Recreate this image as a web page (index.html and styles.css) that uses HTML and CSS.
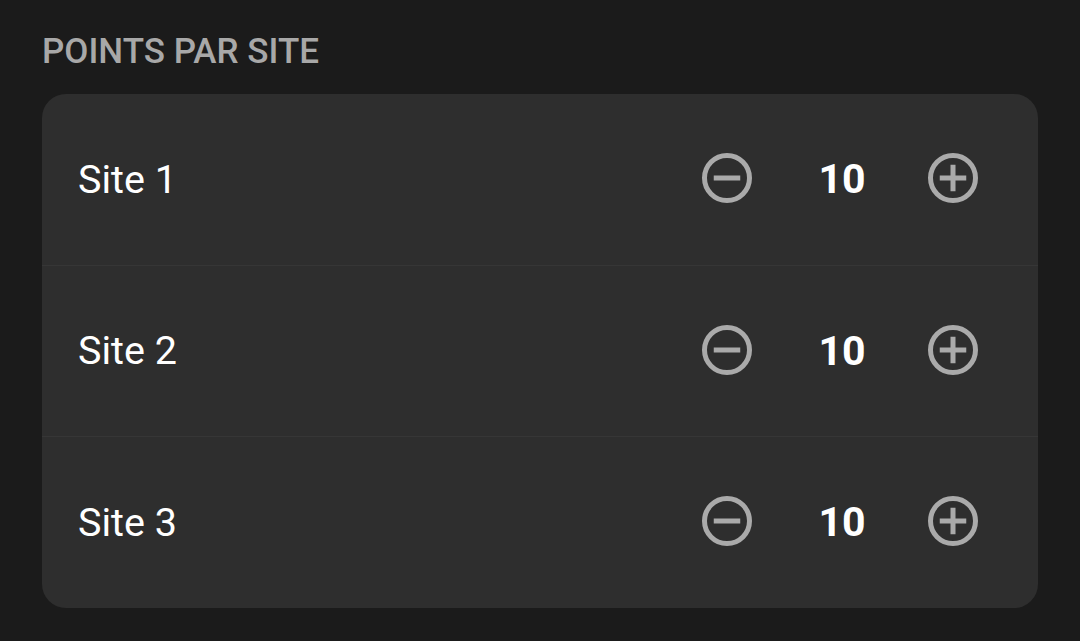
FILE: index.html
```html
<!DOCTYPE html>
<html lang="fr">
<head>
<meta charset="utf-8">
<title>Points par site</title>
<link rel="stylesheet" href="styles.css">
</head>
<body>
<main class="page">
  <h2 class="section-title">POINTS PAR SITE</h2>
  <div class="card">
    <div class="row">
      <span class="site-name">Site 1</span>
      <div class="stepper">
        <button class="icon-btn" aria-label="Diminuer">
          <svg viewBox="0 0 24 24" class="icon"><circle cx="12" cy="12" r="9" fill="none" stroke="currentColor" stroke-width="2"/><path d="M6.7 12h10.6" stroke="currentColor" stroke-width="2"/></svg>
        </button>
        <span class="value">10</span>
        <button class="icon-btn" aria-label="Augmenter">
          <svg viewBox="0 0 24 24" class="icon"><circle cx="12" cy="12" r="9" fill="none" stroke="currentColor" stroke-width="2"/><path d="M6.7 12h10.6M12 6.7v10.6" stroke="currentColor" stroke-width="2"/></svg>
        </button>
      </div>
    </div>
    <div class="row">
      <span class="site-name">Site 2</span>
      <div class="stepper">
        <button class="icon-btn" aria-label="Diminuer">
          <svg viewBox="0 0 24 24" class="icon"><circle cx="12" cy="12" r="9" fill="none" stroke="currentColor" stroke-width="2"/><path d="M6.7 12h10.6" stroke="currentColor" stroke-width="2"/></svg>
        </button>
        <span class="value">10</span>
        <button class="icon-btn" aria-label="Augmenter">
          <svg viewBox="0 0 24 24" class="icon"><circle cx="12" cy="12" r="9" fill="none" stroke="currentColor" stroke-width="2"/><path d="M6.7 12h10.6M12 6.7v10.6" stroke="currentColor" stroke-width="2"/></svg>
        </button>
      </div>
    </div>
    <div class="row">
      <span class="site-name">Site 3</span>
      <div class="stepper">
        <button class="icon-btn" aria-label="Diminuer">
          <svg viewBox="0 0 24 24" class="icon"><circle cx="12" cy="12" r="9" fill="none" stroke="currentColor" stroke-width="2"/><path d="M6.7 12h10.6" stroke="currentColor" stroke-width="2"/></svg>
        </button>
        <span class="value">10</span>
        <button class="icon-btn" aria-label="Augmenter">
          <svg viewBox="0 0 24 24" class="icon"><circle cx="12" cy="12" r="9" fill="none" stroke="currentColor" stroke-width="2"/><path d="M6.7 12h10.6M12 6.7v10.6" stroke="currentColor" stroke-width="2"/></svg>
        </button>
      </div>
    </div>
  </div>
</main>
</body>
</html>
```

FILE: styles.css
```css
html, body {
  margin: 0;
  padding: 0;
  background: #1b1b1b;
  font-family: Roboto, "Noto Sans", sans-serif;
}

.page {
  padding: 32px 42px 0 42px;
}

.section-title {
  margin: 0 0 22px 0;
  font-size: 35px;
  line-height: 40px;
  font-weight: 500;
  color: #a8a8a8;
  letter-spacing: 0;
}

.card {
  background: #2e2e2e;
  border-radius: 24px;
  overflow: hidden;
}

.row {
  height: 170.5px;
  display: flex;
  align-items: center;
  justify-content: space-between;
  padding: 0 55px 0 36px;
}

.row + .row {
  border-top: 1px solid #363636;
}

.site-name {
  font-size: 39.5px;
  color: #ffffff;
  font-weight: 400;
}

.stepper {
  display: flex;
  align-items: center;
}

.icon-btn {
  width: 60px;
  height: 60px;
  padding: 0;
  border: 0;
  background: none;
  color: #aaaaaa;
  display: flex;
  align-items: center;
  justify-content: center;
  margin-top: -2px;
}

.icon {
  width: 60px;
  height: 60px;
  display: block;
}

.value {
  width: 166px;
  text-align: center;
  font-size: 41px;
  font-weight: 700;
  color: #ffffff;
  padding-left: 4px;
  box-sizing: border-box;
}
```
